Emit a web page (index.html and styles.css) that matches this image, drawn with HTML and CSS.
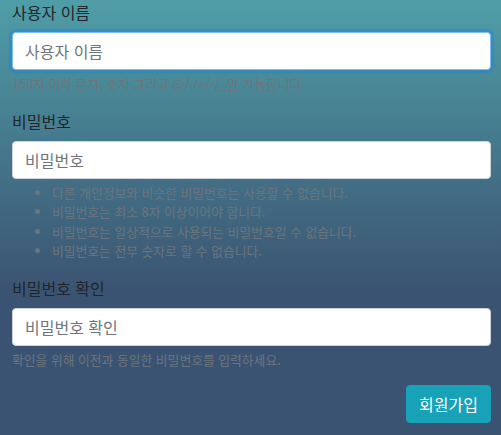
FILE: index.html
```html
<!DOCTYPE html>
<html lang="ko">
<head>
<meta charset="utf-8">
<title>회원가입</title>
<link rel="stylesheet" href="styles.css">
</head>
<body>
<form class="signup">
  <div class="form-group">
    <label class="form-label" for="username">사용자 이름</label>
    <input class="form-control is-focused" id="username" type="text" placeholder="사용자 이름">
    <small class="form-text">150자 이하 문자, 숫자 그리고 @/./+/-/_만 가능합니다.</small>
  </div>
  <div class="form-group">
    <label class="form-label" for="password1">비밀번호</label>
    <input class="form-control" id="password1" type="password" placeholder="비밀번호">
    <small class="form-text">
      <ul class="help-list">
        <li>다른 개인정보와 비슷한 비밀번호는 사용할 수 없습니다.</li>
        <li>비밀번호는 최소 8자 이상이어야 합니다.</li>
        <li>비밀번호는 일상적으로 사용되는 비밀번호일 수 없습니다.</li>
        <li>비밀번호는 전부 숫자로 할 수 없습니다.</li>
      </ul>
    </small>
  </div>
  <div class="form-group">
    <label class="form-label" for="password2">비밀번호 확인</label>
    <input class="form-control" id="password2" type="password" placeholder="비밀번호 확인">
    <small class="form-text">확인을 위해 이전과 동일한 비밀번호를 입력하세요.</small>
  </div>
  <div class="actions">
    <button class="btn-info" type="submit">회원가입</button>
  </div>
</form>
</body>
</html>
```
FILE: styles.css
```css
html {
  background: #3b5372;
}
body {
  margin: 0;
  min-height: 435px;
  background: linear-gradient(180deg, #4f9ea7 0px, #3b5372 290px, #3b5372 100%);
  font-family: "Noto Sans CJK KR", "Noto Sans", sans-serif;
  font-size: 16px;
  line-height: 1.5;
  color: #212529;
}
.signup {
  padding: 0 10px 0 12px;
}
.form-group {
  margin-bottom: 16px;
}
.form-label {
  display: block;
  margin-bottom: 8px;
  line-height: 24px;
}
.form-control {
  display: block;
  box-sizing: border-box;
  width: 100%;
  height: 38px;
  margin: 0;
  padding: 6px 12px;
  font-family: inherit;
  font-size: 16px;
  line-height: 24px;
  color: #495057;
  background: #fff;
  border: 1px solid #ced4da;
  border-radius: 4px;
  outline: none;
}
.form-control::placeholder {
  color: #6c757d;
  opacity: 1;
}
.form-control.is-focused {
  border-color: #80bdff;
  box-shadow: 0 0 0 3.2px rgba(0, 123, 255, 0.25);
}
.form-text {
  display: block;
  margin-top: 4px;
  font-size: 12.8px;
  line-height: 19.2px;
  color: #6c757d;
}
.help-list {
  margin: 0 0 16px;
  padding-left: 40px;
}
.actions {
  display: flex;
  justify-content: flex-end;
}
.btn-info {
  height: 38px;
  padding: 6px 12px;
  font-family: inherit;
  font-size: 16px;
  line-height: 24px;
  color: #fff;
  background: #17a2b8;
  border: 1px solid #17a2b8;
  border-radius: 4px;
}
```
